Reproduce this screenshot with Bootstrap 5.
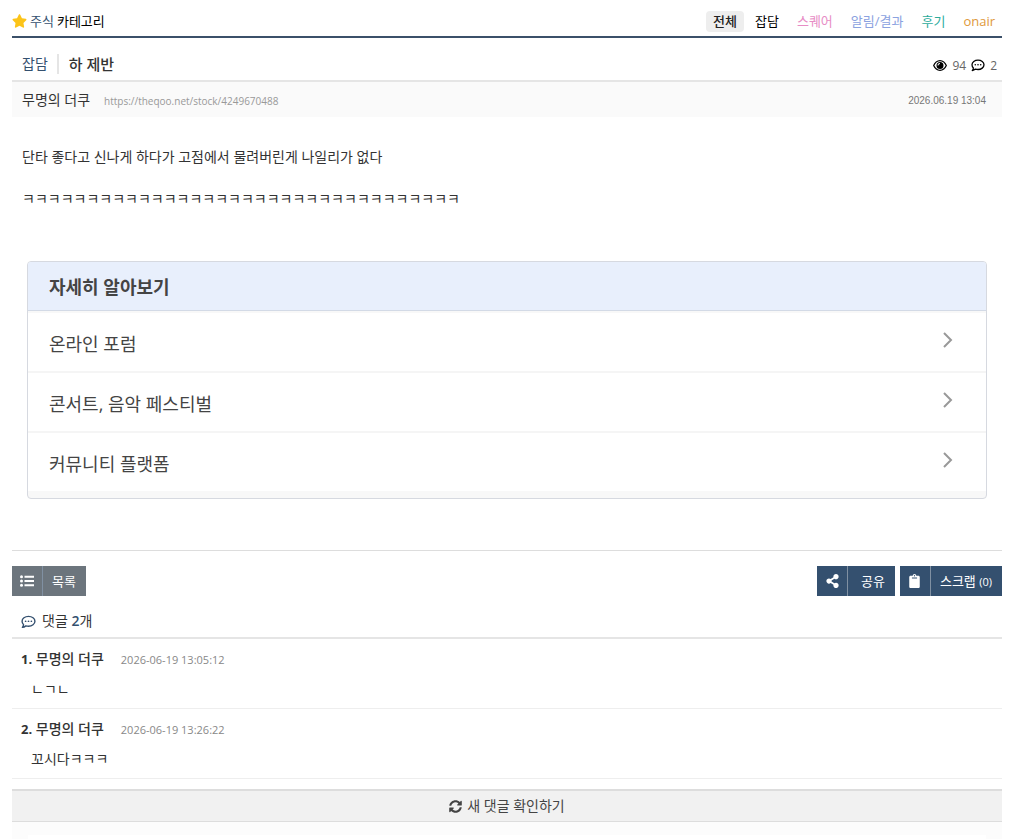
<!DOCTYPE html>
<html lang="ko">
<head>
<meta charset="utf-8">
<meta name="viewport" content="width=device-width, initial-scale=1">
<title>하 제반 - 주식 카테고리</title>
<link rel="stylesheet" href="https://cdn.jsdelivr.net/npm/bootstrap@5.3.0/dist/css/bootstrap.min.css">
<style>
  :root { --navy: #34506f; }
  body { font-family: "Open Sans", "Noto Sans CJK KR", sans-serif; font-size: 14px; line-height: 20px; color: #333; background: #fff; }
  a { color: inherit; text-decoration: none; }
  svg { display: block; flex: none; fill: currentColor; }
  .page { padding: 0 21px 0 12px; }
  .board-head { height: 38px; padding-top: 6px; border-bottom: 2px solid #3b5069; }
  .board-name { font-size: 13px; color: #000; gap: 3px; }
  .board-name a { color: var(--navy); }
  .tabs { font-size: 13px; gap: 4px; }
  .tabs .nav-link { padding: 0 7px; color: #000; border-radius: 4px; line-height: 21px; }
  .tabs .nav-link.active { background: #eee; font-weight: 500; color: #222; }
  .tabs .square { color: #e78cc5; }
  .tabs .notice { color: #8ba2e0; }
  .tabs .review { color: #2bab9c; }
  .tabs .onair { color: #e0983a; }
  .title-row { height: 44px; padding: 9px 5px 0 10px; border-bottom: 2px solid #e5e5e5; }
  .title-row .cat { color: var(--navy); padding-right: 9px; margin-right: 10px; border-right: 2px solid #e5e5e5; }
  .title-row h1 { font-size: 15px; font-weight: 500; line-height: 20px; }
  .counts { font-size: 12px; color: #666; gap: 5px; padding-top: 4px; }
  .counts svg { color: #000; }
  .meta-row { height: 35px; padding: 0 16px 0 10px; background: #fafafa; }
  .meta-row .who { gap: 14px; }
  .url { font-size: 10px; color: #999; padding-top: 2px; }
  .date { font: 10px/20px "Liberation Sans", sans-serif; color: #777; padding-top: 2px; }
  .article { padding: 29px 10px 0; line-height: 21px; font-size: 14px; }
  .article p { margin-bottom: 21px; }
  .related { margin: 52px 15px 51px; border: 1px solid #d6d9e0; border-radius: 4px; background: #f8f8f8; overflow: hidden; padding-bottom: 7px; font-size: 18px; color: #444; }
  .related h2 { font-size: 18px; font-weight: 700; line-height: 24px; margin: 0; padding: 13px 21px 11px; background: #e8effc; border-bottom: 1px solid #d3dae6; color: #444; }
  .related .list-group { padding-top: 2px; }
  .related .list-group-item { height: 60px; padding: 0 32px 0 21px; border-color: #f5f5f5; border-width: 0 0 2px; background: #fff; color: #444; }
  .related .list-group-item:last-child { height: 58px; border-bottom: 0; }
  .related .list-group-item svg { margin-bottom: 5px; }
  .related .list-group-item span { padding-top: 3px; }
  .tools { border-top: 1px solid #ddd; padding-top: 15px; gap: 5px; }
  .tool { height: 30px; padding: 0; border: 0; border-radius: 0; font-size: 13px; line-height: 30px; color: #fff; background: var(--navy); display: flex; }
  .tool:hover { color: #fff; background: #2a425d; }
  .tool .pic { width: 31px; height: 30px; display: flex; align-items: center; justify-content: center; border-right: 1px solid #8090a2; }
  .tool .txt { padding: 0 10px 0 9px; }
  .tool .num { font-size: 11px; }
  .tool.gray { background: #6c757d; }
  .tool.share .txt { padding-left: 13px; }
  .cm-head { height: 43px; padding: 10px 9px 0; gap: 6px; border-bottom: 2px solid #e5e5e5; font-size: 14px; font-weight: 400; margin: 0; }
  .cm-head svg, .cm-head b { color: var(--navy); }
  .cm-head b { font-weight: 600; }
  .comment { height: 70px; padding: 9px 9px 0; border-bottom: 1px solid #eee; }
  .comment .who { gap: 17px; }
  .comment strong { font-size: 14px; font-weight: 500; }
  .comment strong b { font-weight: 700; font-size: 13px; }
  .comment time { font-size: 11px; color: #888; padding-top: 2px; }
  .comment p { margin: 9px 0 0 10px; }
  .refresh { height: 33px; margin-top: 10px; padding: 0; border: solid #ddd; border-width: 2px 0 1px; border-radius: 0; background: #f1f1f1; font-size: 14px; line-height: 20px; color: #444; gap: 5px; }
  .write { background: #fcfcfc; padding: 13px 16px 0; }
  .write div { height: 5px; background: #fff; }
</style>
</head>
<body>
<svg class="d-none" xmlns="http://www.w3.org/2000/svg">
  <symbol id="bubble" viewBox="0 0 14 13"><path d="M7 1.200c3.300 0 6 2 6 4.600s-2.700 4.700-6 4.700c-.9 0-1.800-.2-2.500-.4-.8.700-1.900 1.300-3.200 1.400.7-.8 1-1.600 1.100-2.500C1.500 8.200 1 7 1 5.800 1 3.200 3.700 1.200 7 1.200z" fill="none" stroke="currentColor" stroke-width="1.300" stroke-linejoin="round"/><circle cx="4.300" cy="5.800" r=".8"/><circle cx="7" cy="5.800" r=".8"/><circle cx="9.700" cy="5.800" r=".8"/></symbol>
  <symbol id="arrow" viewBox="0 0 12 18"><path d="M2 2l7 7-7 7" fill="none" stroke="#999" stroke-width="2"/></symbol>
</svg>
<div class="page container-fluid">
  <header class="board-head d-flex justify-content-between align-items-center">
    <div class="board-name d-flex align-items-center">
      <svg width="15" height="14" viewBox="0 0 576 512" style="color:#fcc419"><path d="M259.300 17.800L194 150.200 47.900 171.500c-26.200 3.800-36.700 36.100-17.700 54.600l105.700 103-25 145.500c-4.500 26.300 23.200 46 46.400 33.700L288 439.600l130.700 68.700c23.200 12.200 50.900-7.400 46.400-33.700l-25-145.500 105.700-103c19-18.500 8.500-50.800-17.700-54.600L382 150.200 316.700 17.800c-11.700-23.600-45.600-23.900-57.400 0z"/></svg>
      <a href="#">주식</a><span>카테고리</span>
    </div>
    <nav class="tabs nav" aria-label="카테고리">
      <a class="nav-link active" href="#">전체</a>
      <a class="nav-link" href="#">잡담</a>
      <a class="nav-link square" href="#">스퀘어</a>
      <a class="nav-link notice" href="#">알림/결과</a>
      <a class="nav-link review" href="#">후기</a>
      <a class="nav-link onair" href="#">onair</a>
    </nav>
  </header>

  <main>
    <div class="title-row d-flex justify-content-between align-items-center">
      <div class="d-flex align-items-center"><a class="cat" href="#">잡담</a><h1 class="m-0">하 제반</h1></div>
      <div class="counts d-flex align-items-center">
        <svg width="14" height="11" viewBox="0 0 14 11"><path fill-rule="evenodd" d="M7 0c3 0 5.600 2.200 7 5.500C12.600 8.800 10 11 7 11S1.400 8.800 0 5.500C1.400 2.200 4 0 7 0zM7 1.300C4.600 1.300 2.600 2.800 1.400 5.500 2.600 8.200 4.600 9.700 7 9.700s4.400-1.500 5.600-4.200C11.400 2.800 9.400 1.300 7 1.300z"/><path fill-rule="evenodd" d="M7 2a3.500 3.500 0 1 1 0 7 3.500 3.500 0 0 1 0-7zM7 3a2.500 2.500 0 0 0-2.500 2.500h.9A1.600 1.600 0 0 1 7 3.900z"/></svg>
        <span>94</span>
        <svg width="14" height="13"><use href="#bubble"/></svg>
        <span>2</span>
      </div>
    </div>
    <div class="meta-row d-flex justify-content-between align-items-center">
      <div class="who d-flex align-items-center"><span>무명의 더쿠</span><a class="url" href="#">https://theqoo.net/stock/4249670488</a></div>
      <span class="date">2026.06.19 13:04</span>
    </div>

    <article class="article">
      <p>단타 좋다고 신나게 하다가 고점에서 물려버린게 나일리가 없다</p>
      <p>ㅋㅋㅋㅋㅋㅋㅋㅋㅋㅋㅋㅋㅋㅋㅋㅋㅋㅋㅋㅋㅋㅋㅋㅋㅋㅋㅋㅋㅋㅋㅋㅋㅋㅋ</p>
    </article>

    <section class="related">
      <h2>자세히 알아보기</h2>
      <div class="list-group list-group-flush">
        <a class="list-group-item d-flex justify-content-between align-items-center" href="#"><span>온라인 포럼</span><svg width="12" height="18"><use href="#arrow"/></svg></a>
        <a class="list-group-item d-flex justify-content-between align-items-center" href="#"><span>콘서트, 음악 페스티벌</span><svg width="12" height="18"><use href="#arrow"/></svg></a>
        <a class="list-group-item d-flex justify-content-between align-items-center" href="#"><span>커뮤니티 플랫폼</span><svg width="12" height="18"><use href="#arrow"/></svg></a>
      </div>
    </section>

    <div class="tools d-flex">
      <a class="tool btn gray me-auto" href="#"><span class="pic"><svg width="14" height="12" viewBox="0 0 14 12"><circle cx="1.500" cy="1.700" r="1.500"/><circle cx="1.500" cy="6" r="1.500"/><circle cx="1.500" cy="10.300" r="1.500"/><path d="M4.500.8H14v2H4.500zM4.500 5H14v2H4.500zM4.500 9.300H14v2H4.500z"/></svg></span><span class="txt">목록</span></a>
      <button class="tool btn share" type="button"><span class="pic"><svg width="13" height="14" viewBox="0 0 448 512"><path d="M352 320c-22.608 0-43.387 7.819-59.790 20.895l-102.486-64.054a96.551 96.551 0 0 0 0-41.683l102.486-64.054C308.613 184.181 329.392 192 352 192c53.019 0 96-42.981 96-96S405.019 0 352 0s-96 42.981-96 96c0 7.158.790 14.130 2.276 20.841L155.790 180.895C139.387 167.819 118.608 160 96 160c-53.019 0-96 42.981-96 96s42.981 96 96 96c22.608 0 43.387-7.819 59.790-20.895l102.486 64.054A96.301 96.301 0 0 0 256 416c0 53.019 42.981 96 96 96s96-42.981 96-96-42.981-96-96-96z"/></svg></span><span class="txt">공유</span></button>
      <button class="tool btn" type="button"><span class="pic"><svg width="11" height="14" viewBox="0 0 384 512"><path d="M384 112v352c0 26.510-21.490 48-48 48H48c-26.510 0-48-21.490-48-48V112c0-26.510 21.490-48 48-48h80c0-35.290 28.710-64 64-64s64 28.710 64 64h80c26.510 0 48 21.490 48 48zM192 40c-13.255 0-24 10.745-24 24s10.745 24 24 24 24-10.745 24-24-10.745-24-24-24m96 114v-20a6 6 0 0 0-6-6H102a6 6 0 0 0-6 6v20a6 6 0 0 0 6 6h180a6 6 0 0 0 6-6z"/></svg></span><span class="txt">스크랩 <span class="num">(0)</span></span></button>
    </div>

    <h2 class="cm-head d-flex align-items-center"><svg width="15" height="14"><use href="#bubble"/></svg><span>댓글 <b>2</b>개</span></h2>
    <div class="comment">
      <div class="who d-flex align-items-center"><strong><b>1.</b> 무명의 더쿠</strong><time>2026-06-19 13:05:12</time></div>
      <p>ㄴㄱㄴ</p>
    </div>
    <div class="comment">
      <div class="who d-flex align-items-center"><strong><b>2.</b> 무명의 더쿠</strong><time>2026-06-19 13:26:22</time></div>
      <p>꼬시다ㅋㅋㅋ</p>
    </div>
    <button class="refresh btn w-100 d-flex align-items-center justify-content-center" type="button"><svg width="13" height="13" viewBox="0 0 512 512"><path d="M370.720 133.280C339.458 104.008 298.888 87.962 255.848 88c-77.458.068-144.328 53.178-162.791 126.850-1.344 5.363-6.122 9.150-11.651 9.150H24.103c-7.498 0-13.194-6.807-11.807-14.176C33.933 94.924 134.813 8 256 8c66.448 0 126.791 26.136 171.315 68.685L463.030 40.970C478.149 25.851 504 36.559 504 57.941V192c0 13.255-10.745 24-24 24H345.941c-21.382 0-32.090-25.851-16.971-40.971l41.750-41.749zM32 296h134.059c21.382 0 32.090 25.851 16.971 40.971l-41.750 41.750c31.262 29.273 71.835 45.319 114.876 45.280 77.418-.070 144.315-53.144 162.787-126.849 1.344-5.363 6.122-9.150 11.651-9.150h57.304c7.498 0 13.194 6.807 11.807 14.176C478.067 417.076 377.187 504 256 504c-66.448 0-126.791-26.136-171.315-68.685L48.970 471.030C33.851 486.149 8 475.441 8 454.059V320c0-13.255 10.745-24 24-24z"/></svg><span>새 댓글 확인하기</span></button>
    <div class="write"><div></div></div>
  </main>
</div>
<script src="https://cdn.jsdelivr.net/npm/bootstrap@5.3.0/dist/js/bootstrap.bundle.min.js"></script>
</body>
</html>
